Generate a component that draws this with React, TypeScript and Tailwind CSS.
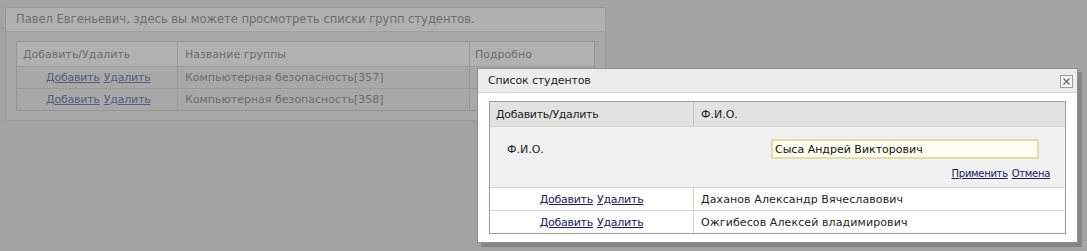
const font = { fontFamily: '"DejaVu Sans", Verdana, sans-serif' };

function BgRow({ name }: { name: string }) {
  return (
    <div className="grid grid-cols-[161px_292px_1fr] h-[22px] border-t border-[#9a9a9a]">
      <div className="flex items-center pl-[29px] border-r border-[#9a9a9a] gap-[4px] tracking-[-0.2px]">
        <span className="underline text-[#56607e]">Добавить</span>
        <span className="underline text-[#56607e]">Удалить</span>
      </div>
      <div className="flex items-center pl-[7px] border-r border-[#9a9a9a]">{name}</div>
      <div />
    </div>
  );
}

function StudentRow({ name }: { name: string }) {
  return (
    <div className="grid grid-cols-[204px_1fr] h-[23px] border-t border-[#d4d4d4] bg-white">
      <div className="flex items-center justify-center gap-[4px] border-r border-[#d4d4d4] tracking-[-0.25px]">
        <span className="underline text-[#20205a]">Добавить</span>
        <span className="underline text-[#20205a]">Удалить</span>
      </div>
      <div className="flex items-center pl-[7px] tracking-[0.1px]">{name}</div>
    </div>
  );
}

export default function App() {
  return (
    <div
      className="relative w-[1087px] h-[251px] bg-[#a3a3a3] overflow-hidden text-[11px] leading-none"
      style={font}
    >
      {/* background page, dimmed */}
      <div className="pt-[7px] pl-[5px]">
        <div className="w-[601px] h-[114px] rounded-[3px] border border-[#979797] bg-[#a8a8a8] text-[#6e6e6e]">
          <div className="h-[24px] flex items-center pl-[10px] bg-[#b0b0b0] border-b border-[#a0a0a0] text-[11.5px]">
            Павел Евгеньевич, здесь вы можете просмотреть списки групп студентов.
          </div>
          <div className="pt-[9px] px-[10px]">
            <div className="border border-[#959595]">
              <div className="grid grid-cols-[161px_292px_1fr] h-[24px] bg-[#b1b1b1]">
                <div className="flex items-center pl-[6px] border-r border-[#9a9a9a]">Добавить/Удалить</div>
                <div className="flex items-center pl-[7px] border-r border-[#9a9a9a]">Название группы</div>
                <div className="flex items-center pl-[5px]">Подробно</div>
              </div>
              <BgRow name="Компьютерная безопасность[357]" />
              <BgRow name="Компьютерная безопасность[358]" />
            </div>
          </div>
        </div>
      </div>

      {/* dialog */}
      <div className="absolute left-[477px] top-[68px] w-[601px] h-[175px] border border-[#8f8f8f] bg-white shadow-[4px_4px_0_#858585] text-[#1e1e1e]">
        <div className="relative h-[24px] flex items-center pl-[10px] bg-[#ececec] border-b border-[#d6d6d6] tracking-[-0.15px]">
          Список студентов
          <div className="absolute right-[4px] top-[6px] w-[13px] h-[13px] border border-[#9c9c9c] bg-[#f4f4f4] flex items-center justify-center">
            <svg width="7" height="7" viewBox="0 0 7 7">
              <path d="M0.5 0.5 L6.5 6.5 M6.5 0.5 L0.5 6.5" stroke="#6a6a6a" strokeWidth="1.4" />
            </svg>
          </div>
        </div>
        <div className="pt-[8px] px-[11px]">
          <div className="border border-[#9e9e9e]">
            <div className="grid grid-cols-[204px_1fr] h-[24px] bg-[#e2e2e2]">
              <div className="flex items-center pl-[6px] border-r border-[#c4c4c4] tracking-[-0.3px]">Добавить/Удалить</div>
              <div className="flex items-center pl-[7px]">Ф.И.О.</div>
            </div>
            <div className="h-[61px] bg-[#f1f1f1] border-t border-[#d4d4d4]">
              <div className="flex items-center pt-[12px] pl-[17px]">
                <span className="w-[264px]">Ф.И.О.</span>
                <div className="w-[268px] h-[20px] border-2 border-[#e3dcab] bg-[#fffef0] flex items-center pl-[2px] text-[#111]">
                  Сыса Андрей Викторович
                </div>
              </div>
              <div className="flex justify-end gap-[4px] pr-[15px] pt-[10px] text-[10px] tracking-[-0.3px]">
                <span className="underline text-[#20205a]">Применить</span>
                <span className="underline text-[#20205a]">Отмена</span>
              </div>
            </div>
            <StudentRow name="Даханов Александр Вячеславович" />
            <StudentRow name="Ожгибесов Алексей владимирович" />
          </div>
        </div>
      </div>
    </div>
  );
}
